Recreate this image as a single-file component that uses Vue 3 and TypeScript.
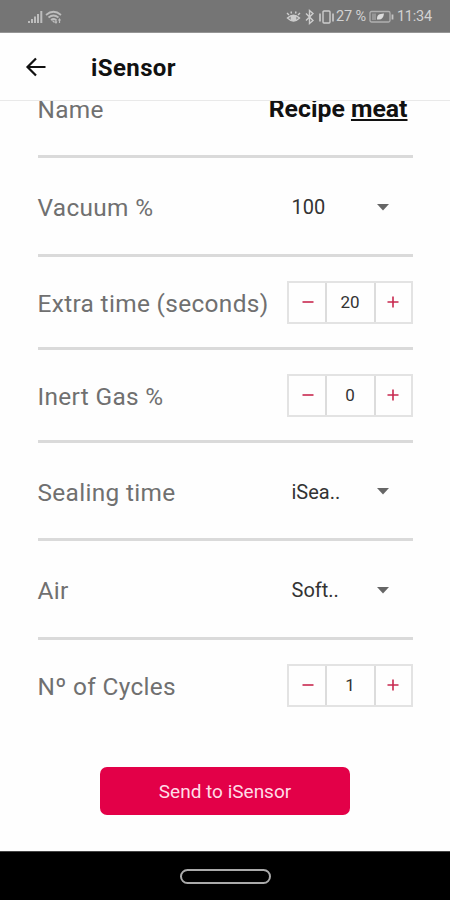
<script setup lang="ts">
import { ref } from 'vue'

interface Row {
  label: string
  kind: 'name' | 'select' | 'stepper'
  text?: string
  value: number
  height: number
}

const rows = ref<Row[]>([
  { label: 'Name', kind: 'name', value: 0, height: 97 },
  { label: 'Vacuum %', kind: 'select', text: '100', value: 0, height: 99 },
  { label: 'Extra time (seconds)', kind: 'stepper', value: 20, height: 93 },
  { label: 'Inert Gas %', kind: 'stepper', value: 0, height: 93 },
  { label: 'Sealing time', kind: 'select', text: 'iSea..', value: 0, height: 98 },
  { label: 'Air', kind: 'select', text: 'Soft..', value: 0, height: 99 },
  { label: 'Nº of Cycles', kind: 'stepper', value: 1, height: 90 },
])
</script>

<template>
  <div class="screen">
    <div class="status">
      <svg class="signal" width="36" height="16" viewBox="0 0 36 16">
        <g fill="#bdbdbd">
          <rect x="0" y="12" width="2" height="2" />
          <rect x="3" y="10" width="2" height="4" />
          <rect x="6" y="7.500" width="2" height="6.500" />
          <rect x="9" y="5" width="2" height="9" />
          <rect x="12.300" y="2" width="2" height="12" />
        </g>
        <g fill="none" stroke="#bdbdbd" stroke-width="1.700">
          <path d="M18 6Q25.500-.5 33 6" />
          <path d="M20.500 8.500Q25.500 4.500 30.500 8.500" />
          <path d="M23 11Q25.500 9 28 11" />
          <path d="M24.500 11.500l2 2M28 10v4M31.500 10v4M27 12.500l1 1.500 1-1.500M30.500 11.500l1-1.500 1 1.500" stroke-width="1.200" />
        </g>
      </svg>
      <div class="status-right">
        <svg width="51" height="16" viewBox="0 0 51 16" fill="none" stroke="#cdcdcd" stroke-width="1.400">
          <path d="M1.500 9Q7.500 3.500 13.500 9Q7.500 15 1.500 9ZM3 6L1 4M5.500 4.500L5 2.500M9.500 4.500l.5-2M12 6l2-2" />
          <circle cx="7.500" cy="9" r="2.300" fill="#cdcdcd" />
          <path d="M20 4.500l7 7-3.500 3V1.500l3.500 3-7 7" />
          <rect x="37" y="2" width="7" height="12" rx="1" />
          <path d="M34 4.500v8M47 4.500v8" stroke-width="1.600" />
        </svg>
        <span class="percent">27 %</span>
        <svg class="battery" width="26" height="14" viewBox="0 0 26 14">
          <rect x="1" y="1.500" width="20" height="10.500" rx="1.500" fill="none" stroke="#b0b0b0" stroke-width="1.300" />
          <rect x="3" y="3.500" width="4" height="6.500" fill="#969696" />
          <path d="M23.500 4.500v5" stroke="#c4c4c4" stroke-width="1.800" />
          <path d="M8 9.500C8 4.500 10 4 15 3.500C14.500 8 12.500 10 9 9.500Z" fill="#ddd" />
        </svg>
        <span class="clock">11:34</span>
      </div>
    </div>

    <header class="header">
      <svg width="22" height="20" viewBox="0 0 22 20" fill="none" stroke="#111" stroke-width="2.200">
        <path d="M20.500 10H3M11 1.500L2.500 10l8.500 8.500" />
      </svg>
      <h1>iSensor</h1>
    </header>

    <main class="content">
      <div class="form">
        <div v-for="row in rows" :key="row.label" class="row" :style="{ height: row.height + 'px' }">
          <span class="label">{{ row.label }}</span>
          <span v-if="row.kind === 'name'" class="name">Recipe <u>meat</u></span>
          <div v-else-if="row.kind === 'select'" class="select">
            <span>{{ row.text }}</span>
            <svg width="12" height="7" viewBox="0 0 12 7"><path d="M0 0h12L6 6.500Z" fill="#666" /></svg>
          </div>
          <div v-else class="stepper">
            <button class="step" @click="row.value--">
              <svg width="12" height="12" viewBox="0 0 12 12"><path d="M.5 6h11" stroke="#c8284f" stroke-width="1.600" /></svg>
            </button>
            <span class="value">{{ row.value }}</span>
            <button class="step" @click="row.value++">
              <svg width="12" height="12" viewBox="0 0 12 12"><path d="M.5 6h11M6 .5v11" stroke="#c8284f" stroke-width="1.600" /></svg>
            </button>
          </div>
        </div>
      </div>
      <button class="send">Send to iSensor</button>
    </main>

    <nav class="nav"><span class="pill"></span></nav>
  </div>
</template>

<style>
body {
  margin: 0;
  background: #fff;
}
</style>

<style scoped>
.screen {
  width: 450px;
  height: 900px;
  display: flex;
  flex-direction: column;
  overflow: hidden;
  background: #fefefe;
  font-family: Roboto, "Liberation Sans", sans-serif;
}
button {
  font-family: inherit;
  border: 0;
  padding: 0;
}
.status {
  flex: none;
  box-sizing: border-box;
  height: 33px;
  padding: 1px 18px 0 28px;
  display: flex;
  align-items: center;
  justify-content: space-between;
  background: #757575;
  border-bottom: 1px solid #959595;
  color: #d2d2d2;
  font-size: 14.500px;
  white-space: nowrap;
}
.status-right {
  display: flex;
  align-items: center;
}
.status-right > svg:first-child {
  margin-right: -1px;
}
.percent {
  width: 33px;
  letter-spacing: -0.1px;
}
.clock {
  margin-left: 2px;
  letter-spacing: -0.2px;
}
.header {
  flex: none;
  box-sizing: border-box;
  height: 68px;
  padding: 1px 25px 0;
  display: flex;
  align-items: center;
  gap: 44px;
  border-bottom: 1px solid #e9e9e9;
}
h1 {
  margin: 1px 0 0;
  font-size: 24px;
  line-height: 28px;
  font-weight: 700;
  letter-spacing: 0.4px;
  color: #111;
}
.content {
  flex: 1;
  min-height: 0;
  overflow: hidden;
  display: flex;
  flex-direction: column;
  align-items: center;
}
.form {
  flex: none;
  width: 375px;
  margin-top: -40px;
}
.row {
  box-sizing: border-box;
  padding-top: 2px;
  display: flex;
  align-items: center;
  justify-content: space-between;
  border-bottom: 3px solid #dadada;
}
.row:last-child {
  border-bottom: 0;
}
.label {
  margin-top: 2px;
  font-size: 24.400px;
  line-height: 28px;
  letter-spacing: 0.34px;
  color: #707070;
  white-space: nowrap;
}
.name {
  margin-right: 5px;
  font-size: 24.800px;
  line-height: 28px;
  font-weight: 700;
  color: #111;
}
.name u {
  text-decoration-thickness: 1.500px;
  text-underline-offset: 2px;
}
.select {
  width: 97px;
  margin-right: 24px;
  display: flex;
  align-items: center;
  justify-content: space-between;
  font-size: 20px;
  line-height: 24px;
  color: #333;
}
.stepper {
  box-sizing: border-box;
  width: 126px;
  height: 43px;
  margin-bottom: 2px;
  display: flex;
  border: 2px solid #e3e3e3;
}
.step {
  width: 36px;
  display: flex;
  align-items: center;
  justify-content: center;
  background: transparent;
}
.step:first-child {
  padding-left: 2px;
}
.step:last-child {
  width: 35px;
  padding-right: 1px;
}
.value {
  flex: 1;
  display: flex;
  align-items: center;
  justify-content: center;
  border: solid #dcdcdc;
  border-width: 0 2px;
  font-size: 17px;
  color: #333;
}
.send {
  flex: none;
  width: 250px;
  height: 48px;
  margin-top: 37px;
  border-radius: 7px;
  background: #e30048;
  color: #ffdce6;
  font-size: 19px;
}
.nav {
  flex: none;
  box-sizing: border-box;
  height: 49px;
  display: flex;
  align-items: center;
  justify-content: center;
  background: #000;
  border-top: 1px solid #444;
}
.pill {
  box-sizing: border-box;
  width: 91px;
  height: 15px;
  border: 2px solid #aaa;
  border-radius: 8px;
}
</style>
